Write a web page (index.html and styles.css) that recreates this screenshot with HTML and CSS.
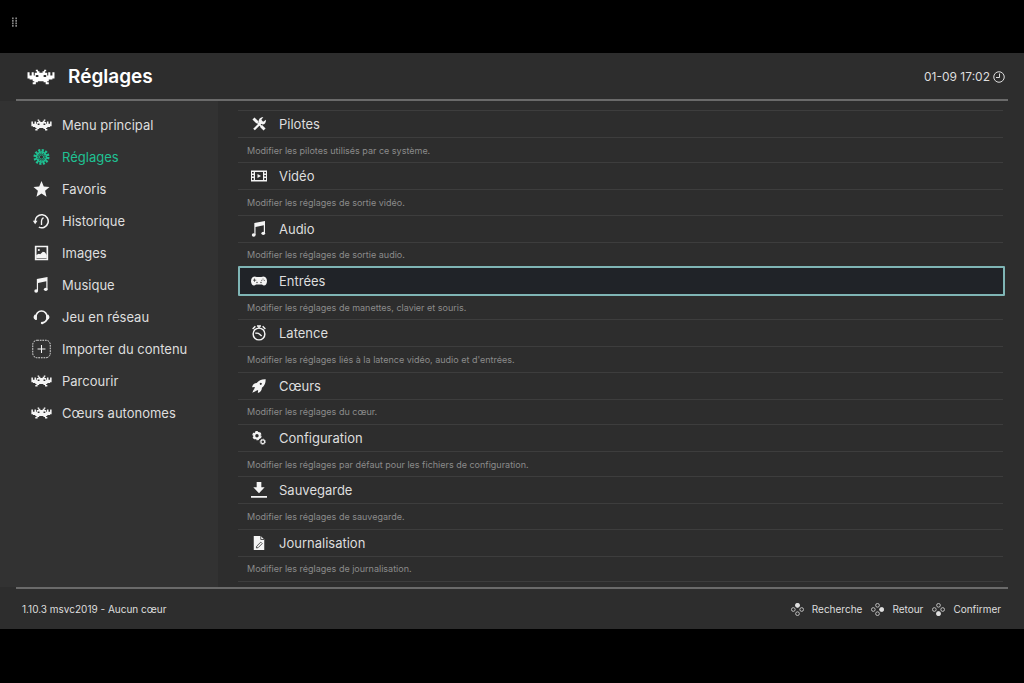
FILE: index.html
```html
<!DOCTYPE html>
<html lang="fr">
<head>
<meta charset="utf-8">
<title>Réglages</title>
<link rel="stylesheet" href="styles.css">
</head>
<body>
<svg class="sprites" aria-hidden="true">
  <symbol id="invader" viewBox="0 0 54 30">
    <path d="M1 6h4v6h4V6h4v6h2V7h4V4h-2V1h4v3h3v3h6V4h3V1h4v3h-2v3h4v5h2V6h4v6h4V6h4v12h-4v2h-7v3h-3v2h3v4h-6v-4h-4v-2H21v2h-4v4h-6v-4h3v-2h-3v-3H5v-2H1z"/>
    <g class="hole"><rect x="17" y="11" width="5" height="4" rx="1"/><rect x="32" y="11" width="5" height="4" rx="1"/></g>
  </symbol>
  <symbol id="gear" viewBox="0 0 24 24">
    <circle cx="12" cy="12" r="10" fill="none" stroke="currentColor" stroke-width="4" stroke-dasharray="3.2 2.036"/>
    <circle cx="12" cy="12" r="6.6" fill="none" stroke="currentColor" stroke-width="4"/>
    <circle class="hole-line" cx="12" cy="12" r="5.8" fill="none" stroke-width="1.2" stroke-dasharray="2.2 1.4"/>
    <circle cx="12" cy="12" r="3.2" fill="none" stroke="currentColor" stroke-width="1.2"/>
  </symbol>
  <symbol id="star" viewBox="0 0 24 24"><path d="M12 0l3.400 8.300L24 9l-6.600 5.700 2.100 8.800L12 18.800l-7.500 4.700 2.100-8.800L0 9l8.600-.7z"/></symbol>
  <symbol id="history" viewBox="0 0 24 24">
    <g fill="none" stroke="currentColor" stroke-width="2.400"><path d="M2.500 13A9.800 9.800 0 1 1 8 21.200"/><path d="M15 7q-3 2-3 5v6" stroke-width="2"/></g>
    <path d="M-1 11.500h7L2.500 17z"/>
  </symbol>
  <symbol id="image" viewBox="0 0 24 24">
    <path fill-rule="evenodd" d="M2 1h20v22H2zM4.500 3.500v17h15v-17z"/>
    <circle cx="8" cy="7.500" r="1.600"/><path d="M4 20v-5l4-2 2 1 4-4 3 1 3 4v5z"/>
  </symbol>
  <symbol id="music" viewBox="0 0 24 24">
    <path d="M5 3l16-3v18h-1.800V6.500L6.800 9v12H5z"/><ellipse cx="4" cy="21" rx="2.800" ry="2.500"/><ellipse cx="18.400" cy="18.500" rx="2.800" ry="2.500"/>
  </symbol>
  <symbol id="headset" viewBox="0 0 24 24">
    <path d="M3.500 15V12A8.500 9 0 0 1 20.500 12V15Q18.500 20 13 21" fill="none" stroke="currentColor" stroke-width="2.600"/>
    <path d="M1.500 8.500H5v8H3Q0 15 0 12zM22.500 8.500H19v8h2Q24 15 24 12z"/><circle cx="13" cy="21" r="2"/>
  </symbol>
  <symbol id="add" viewBox="0 0 24 24">
    <rect x="2" y="2" width="20" height="20" rx="5" fill="none" stroke="currentColor" stroke-width="1" stroke-dasharray="2 1"/>
    <path d="M12 7.500v9M7.500 12h9" fill="none" stroke="currentColor" stroke-width="1.200"/>
  </symbol>
  <symbol id="tools" viewBox="0 0 24 24">
    <path d="M2.500 2.500l7 7M21.500 21.500l-6-6" fill="none" stroke="currentColor" stroke-width="5"/>
    <path d="M9 9l7 7" fill="none" stroke="currentColor" stroke-width="3"/>
    <path d="M3.500 21.500L16 9" fill="none" stroke="currentColor" stroke-width="4"/>
    <path d="M19.500 0l-3.500 4.500 3 3.500 5-3.500Q24 12 18 13l-7-4Q11 1 19.500 0z"/>
  </symbol>
  <symbol id="film" viewBox="0 0 32 24">
    <path fill-rule="evenodd" d="M0 1h32v22H0zM8 4v16h16V4zM2 4v3h3.500V4zm0 6v3h3.500v-3zm0 6v4h3.500v-4zM26.500 4v3H30V4zm0 6v3H30v-3zm0 6v4H30v-4z"/>
    <path d="M13 8l7 4-7 4z"/>
  </symbol>
  <symbol id="gamepad" viewBox="0 0 32 20">
    <path d="M7 1q9 2 18 0 7 1 7 10-1 8-6 8-2 0-4-2H10q-2 2-4 2-5 0-6-8Q0 2 7 1z"/>
    <g class="hole"><path d="M6.500 5h1.500v2.500h2.500V9H8v2.500H6.500V9H4V7.500h2.500z"/><circle cx="24" cy="6" r="1"/><circle cx="26.500" cy="8.500" r="1"/><circle cx="21.500" cy="8.500" r="1"/><circle cx="12" cy="13" r="1.300"/><circle cx="20" cy="13" r="1.300"/></g>
  </symbol>
  <symbol id="timer" viewBox="0 0 24 24">
    <g fill="none" stroke="currentColor" stroke-width="2.200"><circle cx="12" cy="13.500" r="8.800"/><path d="M6.500 12.500q4-1 6 1l3.500 3M9 1.500h6M12 1v4M2.500 6l4-4M21.500 6l-4-4"/></g>
  </symbol>
  <symbol id="rocket" viewBox="0 0 24 24">
    <path fill-rule="evenodd" d="M23.500.5Q13 0 8 7 2 7 0 14l5-.5-2 6 2 1.500 5.500-2-.5 5q7-2 7-9 6.500-4 6.500-14.500zM15 6.500a1.800 1.800 0 1 0 .1 0z"/><path d="M3 18l-2.500 5.500L6 21z"/>
  </symbol>
  <symbol id="gears" viewBox="0 0 24 24">
    <g fill="none" stroke="currentColor"><circle cx="8.500" cy="8" r="4.800" stroke-width="3.600"/><circle cx="8.500" cy="8" r="7" stroke-width="2" stroke-dasharray="4.330 3"/><circle cx="18.500" cy="18.500" r="3.200" stroke-width="2"/><circle cx="18.500" cy="18.500" r="4.600" stroke-width="1.200" stroke-dasharray="2.200 1.400"/></g>
  </symbol>
  <symbol id="download" viewBox="0 0 24 24"><path d="M8.500 0h7v8h5L12 17 3.500 8h5zM0 21h24v2.500H0z"/></symbol>
  <symbol id="log" viewBox="0 0 24 24">
    <path d="M3 0h12l6 6v18H3z"/>
    <g class="hole-line" fill="none" stroke-width="1.400"><path d="M15 0v6h6"/><path d="M8 17.500l7-7 2.500 2.500-7 7-3 .5z"/></g>
  </symbol>
  <symbol id="clock" viewBox="0 0 24 24"><g fill="none" stroke="currentColor" stroke-width="2"><circle cx="12" cy="12" r="10.500"/><path d="M13 5v8H6"/></g></symbol>
  <symbol id="pad" viewBox="0 0 28 28"><g fill="none" stroke="currentColor" stroke-width="1.700"><circle cx="14" cy="5" r="4"/><circle cx="5" cy="14" r="4"/><circle cx="23" cy="14" r="4"/><circle cx="14" cy="23" r="4"/></g></symbol>
  <symbol id="grip" viewBox="0 0 6 12"><path d="M0 0h2v2H0zM4 0h2v2H4zM0 3h2v2H0zM4 3h2v2H4zM0 6h2v2H0zM4 6h2v2H4zM0 9h2v2H0zM4 9h2v2H4z"/></symbol>
</svg>

<div class="topbar"><svg class="grip"><use href="#grip"/></svg></div>

<div class="app">
  <header class="header">
    <svg class="logo"><use href="#invader"/></svg>
    <h1 class="title">Réglages</h1>
    <time class="time">01-09 17:02</time>
    <svg class="clock"><use href="#clock"/></svg>
  </header>

  <div class="content">
    <nav class="sidebar">
      <a class="nav-item" href="#"><svg class="nav-icon"><use href="#invader"/></svg>Menu principal</a>
      <a class="nav-item nav-item-active" href="#" aria-current="page"><svg class="nav-icon nav-icon-small"><use href="#gear"/></svg>Réglages</a>
      <a class="nav-item" href="#"><svg class="nav-icon nav-icon-small"><use href="#star"/></svg>Favoris</a>
      <a class="nav-item" href="#"><svg class="nav-icon nav-icon-small"><use href="#history"/></svg>Historique</a>
      <a class="nav-item" href="#"><svg class="nav-icon nav-icon-small"><use href="#image"/></svg>Images</a>
      <a class="nav-item" href="#"><svg class="nav-icon nav-icon-small"><use href="#music"/></svg>Musique</a>
      <a class="nav-item" href="#"><svg class="nav-icon nav-icon-small"><use href="#headset"/></svg>Jeu en réseau</a>
      <a class="nav-item" href="#"><svg class="nav-icon nav-icon-large"><use href="#add"/></svg>Importer du contenu</a>
      <a class="nav-item" href="#"><svg class="nav-icon"><use href="#invader"/></svg>Parcourir</a>
      <a class="nav-item" href="#"><svg class="nav-icon"><use href="#invader"/></svg>Cœurs autonomes</a>
    </nav>

    <main class="list">
      <div class="entry"><button class="entry-button"><svg class="entry-icon"><use href="#tools"/></svg>Pilotes</button><p class="entry-text">Modifier les pilotes utilisés par ce système.</p></div>
      <div class="entry"><button class="entry-button"><svg class="entry-icon"><use href="#film"/></svg>Vidéo</button><p class="entry-text">Modifier les réglages de sortie vidéo.</p></div>
      <div class="entry"><button class="entry-button"><svg class="entry-icon entry-icon-tall"><use href="#music"/></svg>Audio</button><p class="entry-text">Modifier les réglages de sortie audio.</p></div>
      <div class="entry"><button class="entry-button entry-button-selected"><svg class="entry-icon"><use href="#gamepad"/></svg>Entrées</button><p class="entry-text">Modifier les réglages de manettes, clavier et souris.</p></div>
      <div class="entry"><button class="entry-button"><svg class="entry-icon entry-icon-tall"><use href="#timer"/></svg>Latence</button><p class="entry-text">Modifier les réglages liés à la latence vidéo, audio et d'entrées.</p></div>
      <div class="entry"><button class="entry-button"><svg class="entry-icon"><use href="#rocket"/></svg>Cœurs</button><p class="entry-text">Modifier les réglages du cœur.</p></div>
      <div class="entry"><button class="entry-button"><svg class="entry-icon"><use href="#gears"/></svg>Configuration</button><p class="entry-text">Modifier les réglages par défaut pour les fichiers de configuration.</p></div>
      <div class="entry"><button class="entry-button"><svg class="entry-icon entry-icon-tall"><use href="#download"/></svg>Sauvegarde</button><p class="entry-text">Modifier les réglages de sauvegarde.</p></div>
      <div class="entry"><button class="entry-button"><svg class="entry-icon"><use href="#log"/></svg>Journalisation</button><p class="entry-text">Modifier les réglages de journalisation.</p></div>
    </main>
  </div>

  <footer class="footer">
    <span class="version">1.10.3 msvc2019 - Aucun cœur</span>
    <button class="hint"><svg class="hint-icon" viewBox="0 0 28 28"><use href="#pad"/><circle cx="14" cy="5" r="5"/></svg>Recherche</button>
    <button class="hint"><svg class="hint-icon" viewBox="0 0 28 28"><use href="#pad"/><circle cx="23" cy="14" r="5"/></svg>Retour</button>
    <button class="hint"><svg class="hint-icon" viewBox="0 0 28 28"><use href="#pad"/><circle cx="14" cy="23" r="5"/></svg>Confirmer</button>
  </footer>
</div>
</body>
</html>
```
FILE: styles.css
```css
* { box-sizing: border-box; }

body {
  margin: 0;
  min-height: 100vh;
  padding-bottom: 54px;
  display: flex;
  flex-direction: column;
  background: #000;
  color: #dedede;
  font-family: Inter, "Liberation Sans", sans-serif;
  font-size: 13px;
}

svg { fill: currentColor; flex: none; }
button { font: inherit; color: inherit; background: none; border: 0; padding: 0; text-align: left; }
.sprites { display: none; }
.hole { fill: #303030; }
.hole-line { stroke: #303030; }

.topbar { height: 53px; padding: 17px 12px; color: #858585; }
.grip { display: block; width: 5px; height: 11px; }

.app { flex: 1; display: flex; flex-direction: column; background: #2d2d2d; }

.header {
  height: 48px;
  margin: 0 16px;
  padding: 1px 3px 0 11px;
  display: flex;
  align-items: center;
  border-bottom: 2px solid #6a6a6a;
}
.logo { width: 28px; height: 16px; color: #fff; }
.title { flex: 1; margin: 0 0 0 13px; font-size: 19px; font-weight: 600; color: #fff; }
.time { font-size: 12px; }
.clock { width: 12px; height: 12px; margin-left: 3px; }

.content { flex: 1; display: flex; }

.sidebar {
  width: 218px;
  padding: 8px 0 0 31px;
  background: #323232;
}
.nav-item {
  height: 32px;
  display: flex;
  align-items: center;
  gap: 10px;
  color: inherit;
  text-decoration: none;
}
.nav-item-active { color: #1fc193; }
.nav-icon { width: 21px; height: 12px; color: #f4f4f4; }
.nav-item-active .nav-icon { color: inherit; }
.nav-icon-small { height: 16px; }
.nav-icon-large { height: 24px; overflow: visible; }

.list {
  flex: 1;
  margin: 9px 21px 5px 20px;
  display: flex;
  flex-direction: column;
  border-bottom: 1px solid #3d3d3d;
}
.entry { flex: 1; display: flex; flex-direction: column; border-top: 1px solid #3d3d3d; }
.entry-button {
  height: 26px;
  padding-left: 13px;
  display: flex;
  align-items: center;
  gap: 12px;
}
.entry-button-selected {
  position: relative;
  height: 30px;
  margin: -2px -2px -2px 0;
  padding-left: 11px;
  background: #202328;
  border: 2px solid #7fb5b5;
  border-radius: 1px;
}
.entry-icon { width: 16px; height: 14px; color: #f4f4f4; }
.entry-icon-tall { height: 16px; }
.entry-text {
  flex: 1;
  margin: 0;
  padding-left: 9px;
  display: flex;
  align-items: center;
  border-top: 1px solid #3d3d3d;
  font-size: 9px;
  color: #8b8b8b;
}

.footer {
  height: 42px;
  margin: 0 16px;
  padding: 0 7px 0 6px;
  display: flex;
  align-items: center;
  gap: 9px;
  border-top: 2px solid #6a6a6a;
  font-size: 10px;
}
.version { flex: 1; }
.hint { display: flex; align-items: center; gap: 8px; }
.hint-icon { width: 13px; height: 13px; }
```
